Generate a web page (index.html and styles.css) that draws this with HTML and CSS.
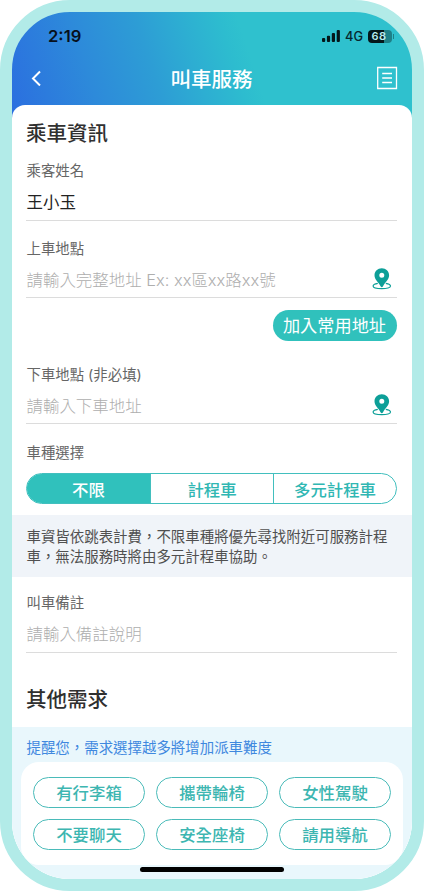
FILE: index.html
```html
<!DOCTYPE html>
<html lang="zh-Hant">
<head>
<meta charset="utf-8">
<meta name="viewport" content="width=device-width, initial-scale=1">
<title>叫車服務</title>
<link rel="stylesheet" href="styles.css">
</head>
<body>
<svg width="0" height="0" class="defs" aria-hidden="true">
  <symbol id="pin" viewBox="0 0 20 22">
    <path d="M5.800 15.400C2.900 15.900 1.100 16.900 1.100 18c0 1.500 3.800 2.700 8.700 2.700s8.700-1.200 8.700-2.700c0-1.100-1.800-2.100-4.700-2.600" fill="none" stroke="currentColor" stroke-width="1.200"/>
    <path fill="currentColor" fill-rule="evenodd" d="M9.800.3C5.700.3 2.500 3.400 2.500 7.300c0 4.300 3.700 6.500 6.200 11.200q1.100 1.300 2.200 0C13.400 13.800 17.100 11.600 17.100 7.300 17.100 3.400 13.900.3 9.800.3Zm0 4.500a2.500 2.500 0 1 1 0 5 2.500 2.500 0 0 1 0-5Z"/>
  </symbol>
</svg>
<div class="phone">
  <header class="header">
    <div class="status">
      <span class="time">2:19</span>
      <div class="status-right">
        <svg class="signal" width="18" height="12" viewBox="0 0 18 12"><rect x="0" y="8" width="3.200" height="4" rx="1"/><rect x="4.900" y="5.800" width="3.200" height="6.200" rx="1"/><rect x="9.800" y="3" width="3.200" height="9" rx="1"/><rect x="14.700" y="0" width="3.200" height="12" rx="1"/></svg>
        <span class="network">4G</span>
        <span class="battery">68</span>
      </div>
    </div>
    <nav class="nav">
      <svg class="back" width="11" height="16" viewBox="0 0 11 16"><path d="M9 1.500 2 8.500l7 7" fill="none" stroke="#fff" stroke-width="2"/></svg>
      <h1>叫車服務</h1>
      <svg class="orders" width="21" height="24" viewBox="0 0 21 24"><g fill="none" stroke="#fff" stroke-width="1.300"><path d="M.7 1.500h18.800v21H.7z"/><path d="M5.200 7.500h9.800M5.200 12h9.800M5.200 16.500h9.800"/></g></svg>
    </nav>
  </header>
  <main class="panel">
    <section class="trip">
      <h2>乘車資訊</h2>
      <label class="label first">乘客姓名</label>
      <div class="field filled">王小玉</div>
      <label class="label">上車地點</label>
      <div class="field"><span>請輸入完整地址 Ex: xx區xx路xx號</span><svg class="pin"><use href="#pin"/></svg></div>
      <button class="save">加入常用地址</button>
      <label class="label dropoff">下車地點 (非必填)</label>
      <div class="field"><span>請輸入下車地址</span><svg class="pin"><use href="#pin"/></svg></div>
      <label class="label kind">車種選擇</label>
      <div class="segments">
        <span class="segment active">不限</span>
        <span class="segment">計程車</span>
        <span class="segment">多元計程車</span>
      </div>
    </section>
    <p class="note">車資皆依跳表計費，不限車種將優先尋找附近可服務計程車，無法服務時將由多元計程車協助。</p>
    <section class="remarks">
      <label class="label remark">叫車備註</label>
      <div class="field">請輸入備註說明</div>
      <h2>其他需求</h2>
    </section>
    <section class="needs">
      <p class="tip">提醒您，需求選擇越多將增加派車難度</p>
      <div class="card">
        <span class="chip">有行李箱</span>
        <span class="chip">攜帶輪椅</span>
        <span class="chip">女性駕駛</span>
        <span class="chip">不要聊天</span>
        <span class="chip">安全座椅</span>
        <span class="chip">請用導航</span>
      </div>
      <div class="home"></div>
    </section>
  </main>
</div>
</body>
</html>
```
FILE: styles.css
```css
* { box-sizing: border-box; }
body {
  margin: 0;
  background: #fff;
  font-family: "Noto Sans CJK TC", sans-serif;
  overflow: hidden;
}
h1, h2, p { margin: 0; }
.defs { position: absolute; }
.phone {
  width: 424px;
  height: 891px;
  border: 12px solid #b2ebe8;
  border-radius: 70px;
  overflow: hidden;
  background: linear-gradient(72deg, #2b6de0 0, #2d8ada 90px, #2d9dd5 153px, #2daed2 195px, #2dbccf 232px, #2fc1ce 250px) 0 0 / 100% 120px no-repeat #fff;
}
.header { height: 93px; }
.status {
  height: 48px;
  padding: 0 20px 0 36px;
  display: flex;
  align-items: center;
  justify-content: space-between;
}
.time { font: 600 16.6px/20px Inter, sans-serif; color: #07101c; }
.status-right { display: flex; align-items: center; }
.signal { fill: #04171a; }
.network { font: 500 12.8px/16px Inter, sans-serif; margin: 1px 5px 0 5px; color: #06282d; }
.battery {
  position: relative;
  width: 24px;
  height: 13px;
  border-radius: 4px;
  background: linear-gradient(90deg, #04171a 16px, #1d8088 16px);
  color: #b9edef;
  font: 600 11px/13px Inter, sans-serif;
  letter-spacing: .5px;
  padding-right: 2px;
  text-align: center;
}
.battery::after {
  content: "";
  position: absolute;
  right: -2px;
  top: 4px;
  width: 1px;
  height: 5px;
  background: #1d8088;
}
.nav {
  height: 36px;
  padding: 0 14px 0 19px;
  display: flex;
  align-items: center;
  justify-content: space-between;
}
.nav h1 {
  font-size: 20.5px;
  line-height: 30px;
  font-weight: 500;
  color: #fff;
  margin-left: 4px;
}
.panel {
  height: 774px;
  background: #fff;
  border-radius: 13px 13px 0 0;
  overflow: hidden;
}
.trip { padding: 13px 15px 11px 14px; }
h2 {
  font-size: 20.5px;
  line-height: 28px;
  font-weight: 500;
  color: #303030;
}
.label {
  display: block;
  margin-top: 17px;
  font: 400 14.4px/22px Inter, "Noto Sans CJK TC", sans-serif;
  color: #666;
}
.label.first { margin-top: 14px; }
.label.dropoff { margin-top: 23px; }
.label.kind { margin-top: 18px; }
.field {
  height: 37px;
  margin-top: 1px;
  padding: 2px 5px 0 0;
  border-bottom: 1px solid #dcdcdc;
  display: flex;
  align-items: center;
  justify-content: space-between;
  font: 300 16.45px/24px Inter, "Noto Sans CJK TC", sans-serif;
  color: #aeaeae;
  white-space: nowrap;
}
.label, .field { padding-left: .5px; }
.first + .field { height: 38px; padding-top: 0; }
.filled { color: #222; font-weight: 400; }
.pin { width: 20px; height: 22px; color: #0d9f98; margin-top: -2px; }
.save {
  display: block;
  width: 124px;
  height: 31px;
  margin: 12px 0 0 auto;
  padding: 0 1px 1px 0;
  border: 0;
  border-radius: 16px;
  background: #30c1bc;
  color: #fff;
  font: 400 17.2px/28px "Noto Sans CJK TC", sans-serif;
}
.segments {
  display: grid;
  grid-template-columns: repeat(3, 1fr);
  height: 31px;
  margin-top: 9px;
  border: 1px solid #42bfbe;
  border-radius: 16px;
  overflow: hidden;
}
.segment {
  font-size: 16.4px;
  line-height: 30px;
  font-weight: 500;
  text-align: center;
  color: #30b7b3;
}
.segment + .segment { border-left: 1px solid #42bfbe; }
.segment.active { background: #30c1bc; color: #fff; }
.note {
  height: 62px;
  padding: 11px 10px 11px 14.5px;
  background: #f0f4f9;
  color: #505050;
  font-size: 14.45px;
  line-height: 20px;
}
.remarks { padding: 0 15px 15px 14px; }
.label.remark { margin-top: 15px; }
.remark + .field { height: 38px; padding-top: 0; }
.remarks h2 { margin-top: 31px; }
.needs {
  height: 152px;
  padding: 10px 9px 0;
  background: #e9f7fc;
}
.tip {
  padding-left: 5.5px;
  font-size: 14.45px;
  line-height: 20px;
  color: #3f88df;
}
.card {
  height: 103px;
  margin-top: 5px;
  padding: 15px 12px;
  border-radius: 18px;
  background: #fff;
  display: grid;
  grid-template-columns: repeat(3, 112px);
  grid-template-rows: 31px 31px;
  justify-content: space-between;
  row-gap: 11px;
}
.chip {
  border: 1px solid #4abbb9;
  border-radius: 16px;
  font-size: 16.4px;
  line-height: 29px;
  font-weight: 500;
  text-align: center;
  color: #3db6b1;
}
.home {
  width: 144px;
  height: 5px;
  margin: 2px auto 0;
  border-radius: 3px;
  background: #000;
}
```
